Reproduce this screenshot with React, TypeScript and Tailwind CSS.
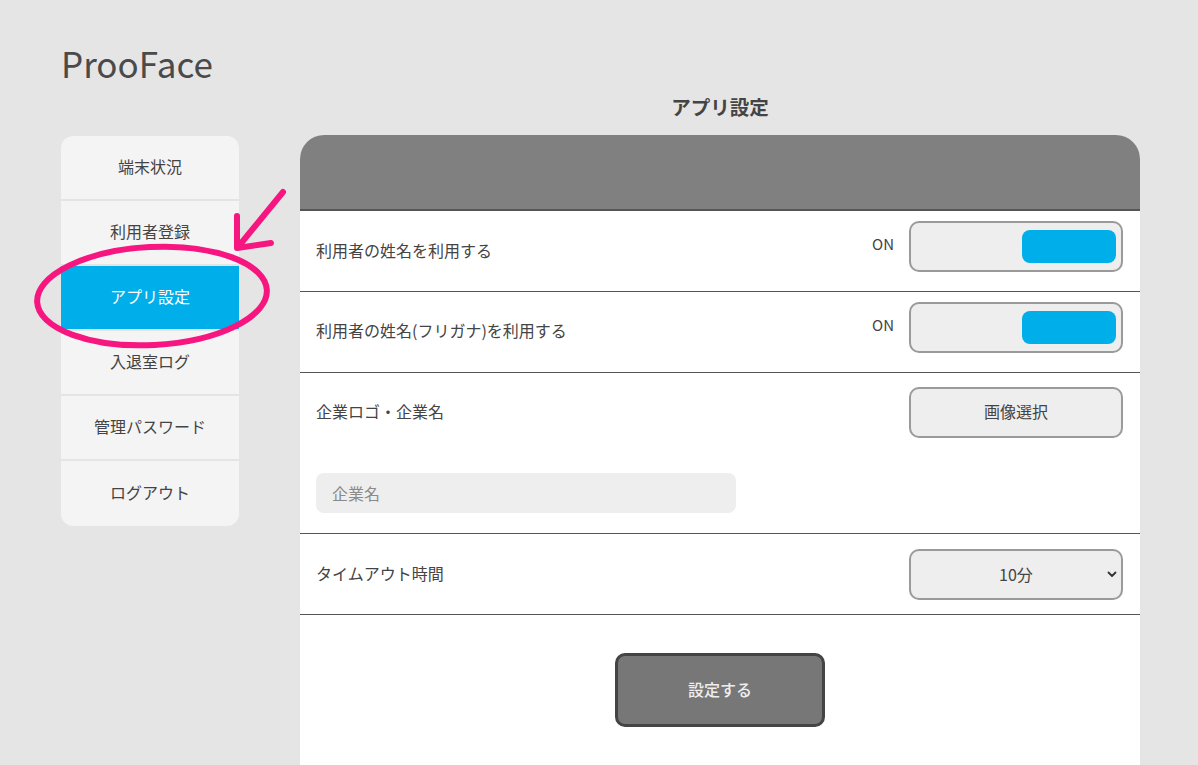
import { useState } from "react";

const menu = ["端末状況", "利用者登録", "アプリ設定", "入退室ログ", "管理パスワード", "ログアウト"];

function Toggle({ on }: { on: boolean }) {
  return (
    <div className="flex items-center gap-[15px]">
      <span className="text-[15px] text-[#444] -mt-[5px]">{on ? "ON" : "OFF"}</span>
      <div className="flex h-[51px] w-[214px] items-center justify-end rounded-[10px] border-2 border-[#9a9a9a] bg-[#eeeeee] pr-[5px]">
        <div className="h-[33px] w-[94px] rounded-[8px] bg-[#00aeea]" />
      </div>
    </div>
  );
}

function Annotation() {
  return (
    <svg className="pointer-events-none absolute left-0 top-0" width="320" height="380" viewBox="0 0 320 380">
      <g fill="none" stroke="#f7157f" strokeWidth="6" strokeLinecap="round" strokeLinejoin="round">
        <ellipse cx="152" cy="296" rx="115" ry="49" transform="rotate(-3 152 296)" />
        <path d="M283 192 L238 247" />
        <path d="M237 216 L237 248 L271 243" />
      </g>
    </svg>
  );
}

export default function App() {
  const [timeout, setTimeoutValue] = useState("10");

  return (
    <div className="relative min-h-screen bg-[#e5e5e5] pl-[61px] pt-[38px] font-['Noto_Sans_CJK_JP','Noto_Sans',sans-serif] text-[#444]">
      <h1 className="text-[35px] leading-[50px] text-[#4a4a4a]">ProoFace</h1>

      <div className="flex gap-[61px]">
        <nav className="mt-[48px] w-[178px] self-start overflow-hidden rounded-[12px] bg-[#f4f4f4]">
          {menu.map((item, i) => (
            <div
              key={item}
              className={
                "flex h-[65px] items-center justify-center pb-[3px] text-[16px] " +
                (i < menu.length - 1 ? "border-b-2 border-[#e4e4e4] " : "") +
                (item === "アプリ設定" ? "bg-[#00aeea] text-white" : "text-[#444]")
              }
            >
              {item}
            </div>
          ))}
        </nav>

        <main className="w-[840px]">
          <h2 className="pb-[12px] pt-[2px] text-center text-[19.5px] font-bold leading-[33px] text-[#444]">アプリ設定</h2>

          <div className="overflow-hidden rounded-t-[24px] bg-white pb-[40px]">
            <div className="h-[76px] border-b-2 border-[#555] bg-[#808080]" />

            <div className="flex h-[81px] items-start justify-between border-b-[1.5px] border-[#555] pl-4 pr-[17px]">
              <span className="mt-[27px] text-[16px]">利用者の姓名を利用する</span>
              <div className="mt-[10px]">
                <Toggle on />
              </div>
            </div>

            <div className="flex h-[81px] items-start justify-between border-b-[1.5px] border-[#555] pl-4 pr-[17px]">
              <span className="mt-[26px] text-[16px]">利用者の姓名(フリガナ)を利用する</span>
              <div className="mt-[10px]">
                <Toggle on />
              </div>
            </div>

            <div className="border-b-[1.5px] border-[#555] pb-[20px] pl-4 pr-[17px] pt-[14px]">
              <div className="flex items-center justify-between">
                <span className="pb-[3px] text-[16px]">企業ロゴ・企業名</span>
                <button className="h-[51px] w-[214px] rounded-[10px] border-2 border-[#9a9a9a] bg-[#eeeeee] pb-[3px] text-[16px] text-[#444]">
                  画像選択
                </button>
              </div>
              <input
                placeholder="企業名"
                className="mt-[35px] h-[40px] w-[420px] rounded-[8px] bg-[#eeeeee] px-4 text-[16px] text-[#444] outline-none placeholder:text-[#8a8a8a]"
              />
            </div>

            <div className="flex h-[81px] items-center justify-between border-b-[1.5px] border-[#555] pl-4 pr-[17px]">
              <span className="pb-[2px] text-[16px]">タイムアウト時間</span>
              <div className="relative">
                <select
                  value={timeout}
                  onChange={(e) => setTimeoutValue(e.target.value)}
                  className="h-[51px] w-[214px] appearance-none rounded-[10px] border-2 border-[#9a9a9a] bg-[#eeeeee] text-[16px] text-[#444] outline-none [text-align-last:center]"
                >
                  <option value="5">5分</option>
                  <option value="10">10分</option>
                  <option value="15">15分</option>
                  <option value="30">30分</option>
                </select>
                <svg className="pointer-events-none absolute right-[6px] top-[22px]" width="10" height="7" viewBox="0 0 10 7">
                  <path d="M1.5 1.5 L5 5 L8.5 1.5" fill="none" stroke="#333" strokeWidth="1.8" strokeLinecap="round" strokeLinejoin="round" />
                </svg>
              </div>
            </div>

            <div className="flex justify-center pt-[38px] pb-[40px]">
              <button className="h-[74px] w-[210px] rounded-[10px] border-[3px] border-[#444] bg-[#777] pb-[2px] text-[16px] font-medium text-[#eee]">
                設定する
              </button>
            </div>
          </div>
        </main>
      </div>

      <Annotation />
    </div>
  );
}
